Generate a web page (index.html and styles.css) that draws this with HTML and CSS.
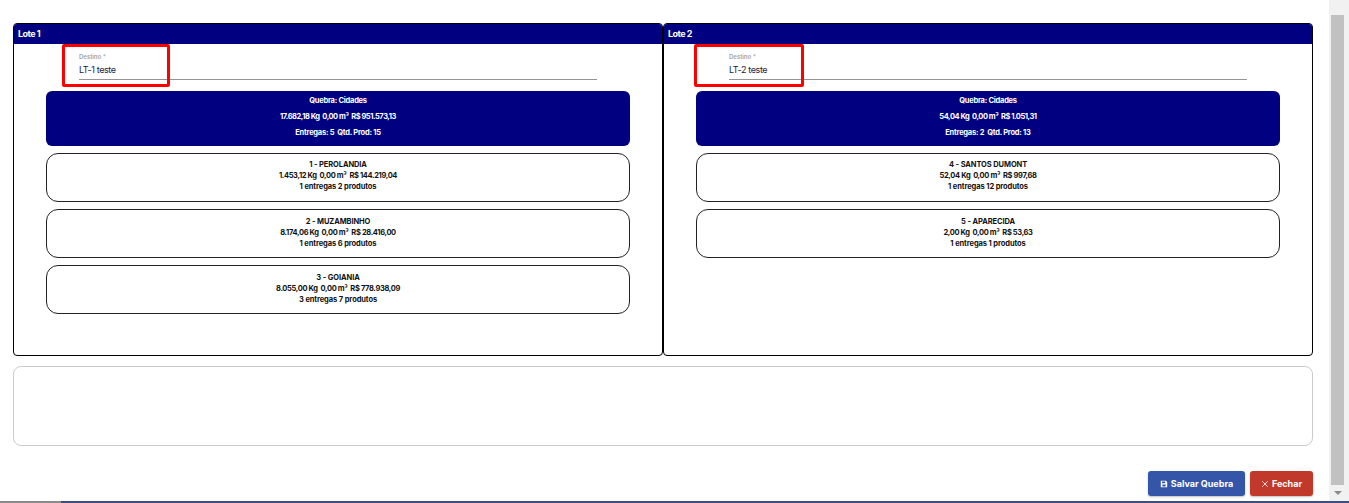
FILE: index.html
```html
<!DOCTYPE html>
<html lang="pt-BR">
<head>
<meta charset="utf-8">
<title>Quebra</title>
<link rel="stylesheet" href="styles.css">
</head>
<body>
<div class="page">
  <main class="main">
    <div class="lots">
      <section class="lot">
        <h2 class="lot-title">Lote 1</h2>
        <div class="lot-body">
          <div class="field">
            <span class="mark mark-one"></span>
            <div class="field-label">Destino *</div>
            <div class="field-value">LT-1 teste</div>
          </div>
          <div class="summary">
            <p>Quebra: Cidades</p>
            <p class="fig">17.682,18 Kg&nbsp; 0,00 m³&nbsp; R$ 951.573,13</p>
            <p>Entregas: 5&nbsp; Qtd. Prod: 15</p>
          </div>
          <div class="stop"><p>1 - PEROLANDIA</p><p class="fig">1.453,12 Kg&nbsp; 0,00 m³&nbsp; R$ 144.219,04</p><p>1 entregas 2 produtos</p></div>
          <div class="stop"><p>2 - MUZAMBINHO</p><p class="fig">8.174,06 Kg&nbsp; 0,00 m³&nbsp; R$ 28.416,00</p><p>1 entregas 6 produtos</p></div>
          <div class="stop"><p>3 - GOIANIA</p><p class="fig">8.055,00 Kg&nbsp; 0,00 m³&nbsp; R$ 778.938,09</p><p>3 entregas 7 produtos</p></div>
        </div>
      </section>
      <section class="lot">
        <h2 class="lot-title">Lote 2</h2>
        <div class="lot-body">
          <div class="field">
            <span class="mark mark-two"></span>
            <div class="field-label">Destino *</div>
            <div class="field-value">LT-2 teste</div>
          </div>
          <div class="summary">
            <p>Quebra: Cidades</p>
            <p class="fig">54,04 Kg&nbsp; 0,00 m³&nbsp; R$ 1.051,31</p>
            <p>Entregas: 2&nbsp; Qtd. Prod: 13</p>
          </div>
          <div class="stop"><p>4 - SANTOS DUMONT</p><p class="fig">52,04 Kg&nbsp; 0,00 m³&nbsp; R$ 997,68</p><p>1 entregas 12 produtos</p></div>
          <div class="stop"><p>5 - APARECIDA</p><p class="fig">2,00 Kg&nbsp; 0,00 m³&nbsp; R$ 53,63</p><p>1 entregas 1 produtos</p></div>
        </div>
      </section>
    </div>
    <div class="notes"></div>
    <div class="actions">
      <button class="btn btn-save" type="button">
        <svg class="btn-icon" viewBox="0 0 10 10" aria-hidden="true"><path fill="currentColor" fill-rule="evenodd" d="M1 1h6.5L9 2.5V9H1zM2.5 2v2h4V2zM3 5.5V8h4V5.5z"/></svg>
        Salvar Quebra
      </button>
      <button class="btn btn-close" type="button">
        <svg class="btn-icon" viewBox="0 0 10 10" aria-hidden="true"><path fill="none" stroke="currentColor" stroke-width="1" d="M1.5 1.5l7 7M8.5 1.5l-7 7"/></svg>
        Fechar
      </button>
    </div>
  </main>
  <aside class="scrollbar">
    <span class="arrow arrow-up"></span>
    <span class="thumb"></span>
    <span class="arrow arrow-down"></span>
  </aside>
</div>
<div class="strip"><span class="strip-start"></span></div>
</body>
</html>
```
FILE: styles.css
```css
* { box-sizing: border-box; }
html, body { margin: 0; height: 503px; overflow: hidden; background: #fff; }
body { font-family: "Inter", "Liberation Sans", sans-serif; color: #111; display: flex; flex-direction: column; }
p { margin: 0; }

.page { display: flex; height: 501px; }
.main { width: 1329px; padding: 23px 16px 0 13px; display: flex; flex-direction: column; }

.lots { display: flex; }
.lot { width: 650px; height: 333px; border: 1px solid #000; border-radius: 4px; overflow: hidden; }
.lot-title { margin: 0; height: 20px; padding: 0 4px; background: #000080; color: #fff; font-size: 9px; font-weight: 700; letter-spacing: -0.5px; line-height: 19px; }
.lot-body { padding: 0 32px; }

.field { position: relative; margin: 0 33px; height: 36px; padding-top: 8px; border-bottom: 1px solid #949494; }
.field-label { font-size: 6px; line-height: 9px; color: #a3a3a3; font-weight: 600; }
.field-value { font-size: 9px; line-height: 12px; margin-top: 3px; color: #1a1a3a; letter-spacing: -0.4px; }
.mark { position: absolute; top: 0; height: 43px; border: 3px solid #f00; border-radius: 2px; }
.mark-one { left: -17px; width: 108px; }
.mark-two { left: -35px; width: 110px; }

.summary { margin-top: 11px; height: 55px; border-radius: 6px; background: #000080; color: #fff; font-size: 7.5px; font-weight: 700; letter-spacing: -0.25px; text-align: center; display: flex; flex-direction: column; justify-content: space-between; padding: 4px 0 8px; line-height: 11px; }
.summary .fig { letter-spacing: -0.45px; }
.stop { margin-top: 7px; height: 49px; border: 1px solid #222; border-radius: 12px; font-size: 7.5px; font-weight: 700; letter-spacing: -0.1px; line-height: 11px; text-align: center; padding-top: 5px; color: #111; }
.stop .fig { letter-spacing: -0.35px; }
.stop + .stop { margin-top: 7px; padding-top: 6px; }

.notes { margin-top: 10px; height: 80px; width: 1300px; border: 1px solid #ccc; border-radius: 8px; }

.actions { display: flex; justify-content: flex-end; gap: 5px; margin-top: 25px; width: 1300px; }
.btn { height: 25px; padding: 0; border: 0; border-radius: 3px; color: #fff; font: 700 9px/25px "Inter", "Liberation Sans", sans-serif; display: flex; align-items: center; justify-content: center; gap: 3px; box-shadow: 0 1px 2px rgba(0,0,0,.25); }
.btn-save { width: 97px; background: #3455a8; }
.btn-close { width: 63px; background: #c0392b; }
.btn-icon { width: 8px; height: 8px; }

.scrollbar { width: 20px; background: #f1f1f1; display: flex; flex-direction: column; align-items: center; padding-left: 2px; padding-right: 5px; height: 501px; }
.arrow { width: 0; height: 0; border-left: 4px solid transparent; border-right: 4px solid transparent; }
.arrow-up { margin-top: 5px; margin-bottom: 5px; border-bottom: 5px solid #f1f1f1; }
.thumb { display: block; width: 13px; height: 470px; background: #c1c1c1; }
.arrow-down { margin-top: 6px; border-top: 4px solid #8a8a8a; }

.strip { height: 2px; background: #3d5078; }
.strip-start { display: block; width: 61px; height: 2px; background: #8a8a8a; }
```
